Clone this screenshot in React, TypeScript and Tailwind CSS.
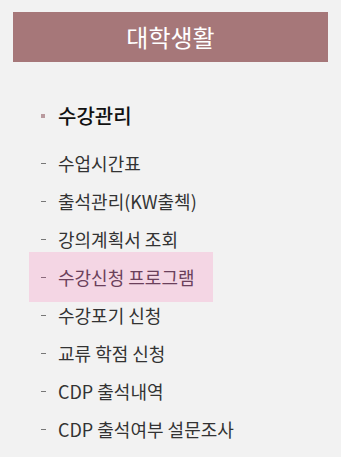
const items = [
  { label: '수업시간표' },
  { label: '출석관리(KW출첵)' },
  { label: '강의계획서 조회' },
  { label: '수강신청 프로그램', active: true },
  { label: '수강포기 신청' },
  { label: '교류 학점 신청' },
  { label: 'CDP 출석내역' },
  { label: 'CDP 출석여부 설문조사' },
]

export default function App() {
  return (
    <div
      className="min-h-screen bg-[#f2f2f2] px-[13px] pt-[12px]"
      style={{ fontFamily: '"Noto Sans CJK KR", "Noto Sans", sans-serif' }}
    >
      {/* 상단 타이틀 */}
      <div className="flex h-[50px] items-center justify-center bg-[#a67779] text-[24px] font-normal text-white">
        대학생활
      </div>

      <div className="mt-[35px] pl-[16px]">
        <div className="flex h-[38px] items-center pl-[12px]">
          <span className="h-[4px] w-[4px] bg-[#b99a9e]" />
          <span className="ml-[13px] text-[20px] font-medium text-[#111]">수강관리</span>
        </div>

        <ul className="mt-[9px]">
          {items.map(item => (
            <li key={item.label}>
              {item.active ? (
                <div className="-my-[6px] inline-flex h-[50px] items-center bg-[#f4d6e4] pl-[12px] pr-[18px]">
                  <span className="h-[1px] w-[5px] bg-[#8a6a7c]" />
                  <span className="ml-[12px] text-[18px] text-[#6b405b]">{item.label}</span>
                </div>
              ) : (
                <div className="flex h-[38px] items-center pl-[12px]">
                  <span className="h-[1px] w-[5px] bg-[#777]" />
                  <span className="ml-[12px] text-[18px] text-[#333]">{item.label}</span>
                </div>
              )}
            </li>
          ))}
        </ul>
      </div>
    </div>
  )
}
